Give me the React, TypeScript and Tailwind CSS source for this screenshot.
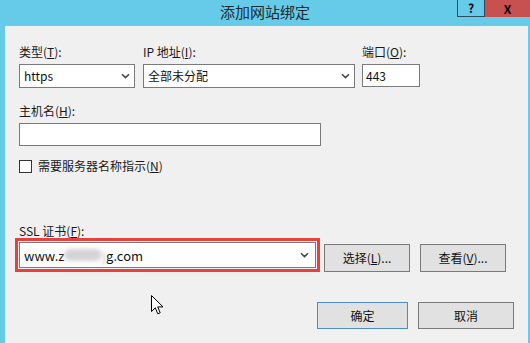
import React from "react";

const font = { fontFamily: '"Noto Sans CJK SC", "Noto Sans", sans-serif' };

function Chevron() {
  return (
    <svg width="9" height="6" viewBox="0 0 9 6" className="shrink-0">
      <path d="M1 1.2 L4.5 4.6 L8 1.2" fill="none" stroke="#444" strokeWidth="1.5" />
    </svg>
  );
}

function Select({ value, className }: { value: React.ReactNode; className: string }) {
  return (
    <div
      className={`flex items-center justify-between bg-white border border-[#7a7a7a] pl-[4px] pr-[4px] text-[12px] text-[#111] ${className}`}
    >
      <span className="leading-none">{value}</span>
      <Chevron />
    </div>
  );
}

function Label({ children }: { children: React.ReactNode }) {
  return <div className="h-[16px] leading-[16px] text-[12px] text-[#1a1a1a]">{children}</div>;
}

function Btn({ children, primary, className }: { children: React.ReactNode; primary?: boolean; className: string }) {
  return (
    <button
      className={`flex items-center justify-center bg-[#e1e1e1] text-[12px] text-[#111] border ${
        primary ? "border-[#4f8cc4]" : "border-[#7a7a7a]"
      } ${className}`}
    >
      {children}
    </button>
  );
}

export default function App() {
  return (
    <div className="w-[530px] h-[343px] bg-[#65cbe8] flex flex-col overflow-hidden relative" style={font}>
      <div className="h-[26px] relative flex items-center justify-center shrink-0">
        <span className="text-[15px] text-[#1a2a33] -mt-[1px]">添加网站绑定</span>
        <div className="absolute top-0 right-0 flex h-[17px]">
          <div className="w-[28px] border border-t-0 border-[#2c4c5c] flex items-center justify-center text-[12px] font-bold text-black">
            ?
          </div>
          <div className="w-[45px] bg-[#c75050] flex items-center justify-center text-[12px] font-bold text-black">
            X
          </div>
        </div>
      </div>

      <div className="flex-1 ml-[5px] mr-[2px] bg-[#f0f0f0] pl-[14px] pr-[14px] pt-[18px] flex flex-col">
        <div className="flex gap-[8px]">
          <div className="flex flex-col gap-[4px]">
            <Label>
              类型(<u>T</u>):
            </Label>
            <Select value="https" className="w-[116px] h-[24px]" />
          </div>
          <div className="flex flex-col gap-[4px]">
            <Label>
              IP 地址(<u>I</u>):
            </Label>
            <Select value="全部未分配" className="w-[212px] h-[24px]" />
          </div>
          <div className="flex flex-col gap-[4px] ml-[-1px]">
            <Label>
              端口(<u>O</u>):
            </Label>
            <div className="w-[58px] h-[23px] bg-white border border-[#7a7a7a] pl-[3px] flex items-center text-[12px] text-[#111]">
              443
            </div>
          </div>
        </div>

        <div className="flex flex-col gap-[4px] mt-[15px]">
          <Label>
            主机名(<u>H</u>):
          </Label>
          <div className="w-[302px] h-[23px] bg-white border border-[#7a7a7a]" />
        </div>

        <div className="flex items-center gap-[6px] mt-[12px] h-[16px]">
          <div className="w-[13px] h-[13px] bg-white border border-[#333]" />
          <span className="text-[12px] text-[#1a1a1a]">
            需要服务器名称指示(<u>N</u>)
          </span>
        </div>

        <div className="flex flex-col gap-[3px] mt-[49px]">
          <Label>
            SSL 证书(<u>F</u>):
          </Label>
          <div className="flex items-start">
            <Select
              value={
                <span className="flex items-center text-[13px]">
                  www.z
                  <span className="inline-block w-[38px] h-[12px] rounded-full bg-[#d4d4d4] blur-[2px]" />
                  <span className="text-[#ccc] blur-[1px]">j</span>
                  g.com
                </span>
              }
              className="w-[297px] h-[26px] pr-[6px] outline outline-[3px] outline-[#e8403f] outline-offset-[1px]"
            />
            <Btn className="w-[86px] h-[28px] mt-[2px] ml-[8px]">
              选择(<u>L</u>)...
            </Btn>
            <Btn className="w-[86px] h-[28px] mt-[2px] ml-[10px]">
              查看(<u>V</u>)...
            </Btn>
          </div>
        </div>

        <div className="flex justify-end gap-[10px] mt-[30px] pr-[0px]">
          <Btn primary className="w-[91px] h-[27px]">
            确定
          </Btn>
          <Btn className="w-[96px] h-[27px]">取消</Btn>
        </div>
      </div>

      <svg className="absolute left-[151px] top-[295px]" width="13" height="21" viewBox="0 0 13 21">
        <path
          d="M0.5 0.5 L0.5 16.5 L4.3 12.8 L6.8 18.8 L9.2 17.8 L6.7 11.9 L12 11.9 Z"
          fill="white"
          stroke="black"
          strokeWidth="1"
          strokeLinejoin="round"
        />
      </svg>
    </div>
  );
}
